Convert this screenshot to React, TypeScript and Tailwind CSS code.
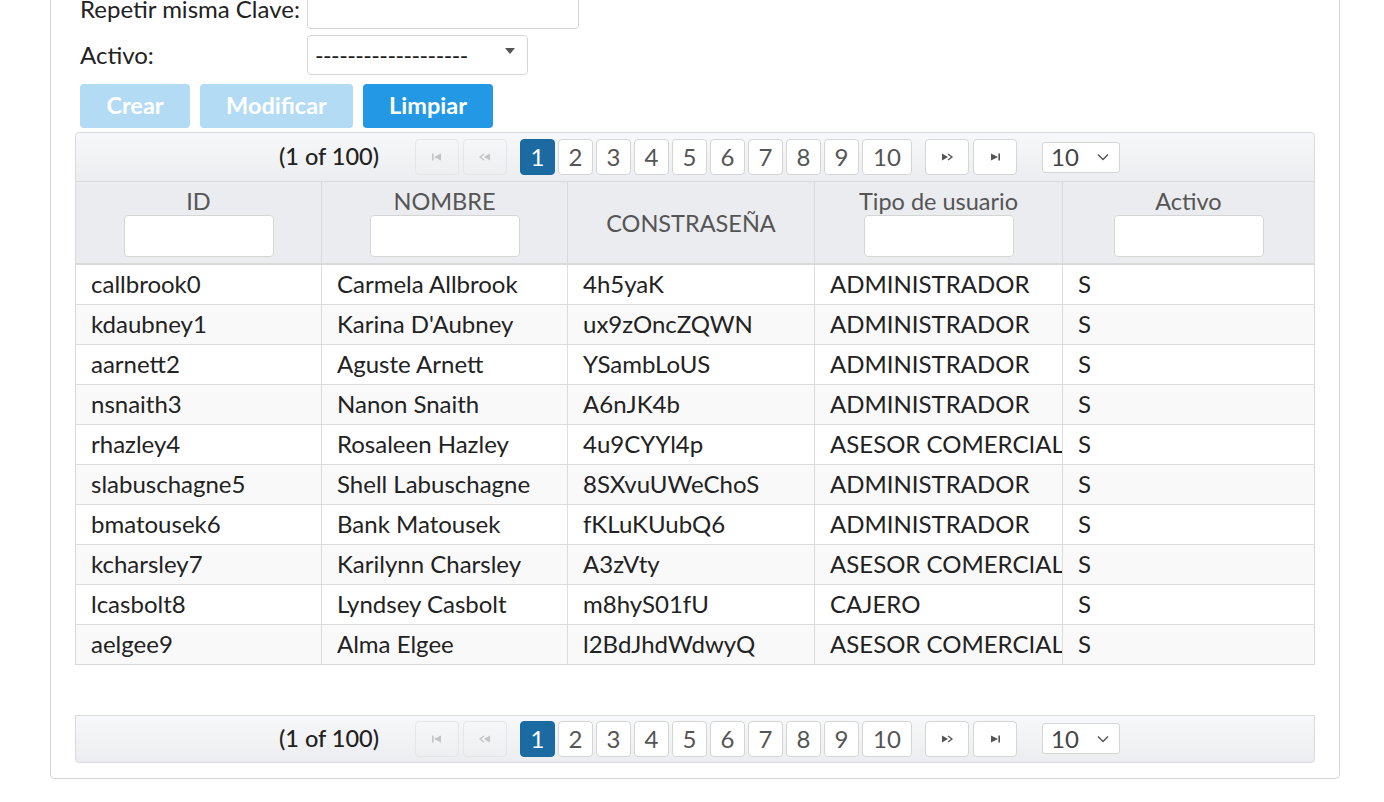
import React from 'react'

const users = [
  { id: 'callbrook0', nombre: 'Carmela Allbrook', clave: '4h5yaK', tipo: 'ADMINISTRADOR', activo: 'S' },
  { id: 'kdaubney1', nombre: "Karina D'Aubney", clave: 'ux9zOncZQWN', tipo: 'ADMINISTRADOR', activo: 'S' },
  { id: 'aarnett2', nombre: 'Aguste Arnett', clave: 'YSambLoUS', tipo: 'ADMINISTRADOR', activo: 'S' },
  { id: 'nsnaith3', nombre: 'Nanon Snaith', clave: 'A6nJK4b', tipo: 'ADMINISTRADOR', activo: 'S' },
  { id: 'rhazley4', nombre: 'Rosaleen Hazley', clave: '4u9CYYl4p', tipo: 'ASESOR COMERCIAL', activo: 'S' },
  { id: 'slabuschagne5', nombre: 'Shell Labuschagne', clave: '8SXvuUWeChoS', tipo: 'ADMINISTRADOR', activo: 'S' },
  { id: 'bmatousek6', nombre: 'Bank Matousek', clave: 'fKLuKUubQ6', tipo: 'ADMINISTRADOR', activo: 'S' },
  { id: 'kcharsley7', nombre: 'Karilynn Charsley', clave: 'A3zVty', tipo: 'ASESOR COMERCIAL', activo: 'S' },
  { id: 'lcasbolt8', nombre: 'Lyndsey Casbolt', clave: 'm8hyS01fU', tipo: 'CAJERO', activo: 'S' },
  { id: 'aelgee9', nombre: 'Alma Elgee', clave: 'l2BdJhdWdwyQ', tipo: 'ASESOR COMERCIAL', activo: 'S' },
]

const pages = [1, 2, 3, 4, 5, 6, 7, 8, 9, 10]

function NavIcon({ kind }: { kind: 'first' | 'prev' | 'next' | 'last' }) {
  return (
    <svg width="14" height="8" viewBox="0 0 14 8" fill="currentColor">
      {kind === 'first' && (
        <>
          <rect x="2" y="0.5" width="1.6" height="7" />
          <polygon points="4,4 11,0.5 11,7.5" />
        </>
      )}
      {kind === 'prev' && (
        <>
          <polyline points="6,1 2,4 6,7" fill="none" stroke="currentColor" strokeWidth="1.3" />
          <polygon points="6,4 12,0.5 12,7.5" />
        </>
      )}
      {kind === 'next' && (
        <>
          <polygon points="2,0.5 8,4 2,7.5" />
          <polyline points="8,1 12,4 8,7" fill="none" stroke="currentColor" strokeWidth="1.3" />
        </>
      )}
      {kind === 'last' && (
        <>
          <polygon points="3,0.5 10,4 3,7.5" />
          <rect x="10.4" y="0.5" width="1.6" height="7" />
        </>
      )}
    </svg>
  )
}

function Paginator({ position }: { position: 'top' | 'bottom' }) {
  const rounded = position === 'top' ? 'rounded-t-[4px] h-[50px]' : 'rounded-b-[4px] h-[48px]'
  return (
    <div
      className={`flex items-center border border-[#d9d9d9] bg-gradient-to-b from-[#f7f8f9] to-[#ebedf0] ${rounded}`}
    >
      <span className="ml-[203px] w-[110px] whitespace-nowrap text-[23.5px] font-medium text-[#222]">(1 of 100)</span>
      <div className="ml-[26px] flex gap-[4px]">
        {(['first', 'prev'] as const).map((k) => (
          <span
            key={k}
            className="flex h-[36px] w-[44px] items-center justify-center rounded-[4px] border border-[#e6e6e6] text-[#c4c4c4]"
          >
            <NavIcon kind={k} />
          </span>
        ))}
      </div>
      <div className="ml-[13px] flex gap-[3px]">
        {pages.map((p) => (
          <span
            key={p}
            className={`flex h-[36px] items-center justify-center rounded-[4px] border text-[24px] ${
              p === 10 ? 'w-[50px]' : 'w-[35px]'
            } ${
              p === 1
                ? 'border-[#1a6aa0] bg-[#1b6aa2] text-white'
                : 'border-[#d5d5d5] bg-white text-[#555]'
            }`}
          >
            {p}
          </span>
        ))}
      </div>
      <div className="ml-[13px] flex gap-[4px]">
        {(['next', 'last'] as const).map((k) => (
          <span
            key={k}
            className="flex h-[36px] w-[44px] items-center justify-center rounded-[4px] border border-[#d5d5d5] bg-white text-[#555]"
          >
            <NavIcon kind={k} />
          </span>
        ))}
      </div>
      <div className="ml-[25px] flex h-[31px] w-[78px] items-center justify-between rounded-[3px] border border-[#d5d5d5] bg-white pl-[8px] pr-[10px] text-[24px] text-[#444]">
        <span>10</span>
        <svg width="12" height="8" viewBox="0 0 12 8" fill="none" stroke="#555" strokeWidth="1.5">
          <polyline points="1,1.5 6,6.5 11,1.5" />
        </svg>
      </div>
    </div>
  )
}

function HeaderCell({ title, filter = true }: { title: string; filter?: boolean }) {
  return (
    <th className="h-[82px] border-r border-[#d9d9d9] align-middle font-normal last:border-r-0">
      <div className="flex flex-col items-center">
        <span className="text-[23.5px] leading-[26px] text-[#555]">{title}</span>
        {filter && (
          <div className="mt-[1px] h-[42px] w-[150px] rounded-[4px] border border-[#d5d5d5] bg-white" />
        )}
      </div>
    </th>
  )
}

export default function App() {
  return (
    <div className="h-[802px] overflow-hidden bg-white font-['Lato','Liberation_Sans',sans-serif] text-[#222]">
      <div className="-mt-[11px] ml-[50px] w-[1290px] rounded-b-[5px] border-x border-b border-[#d4d4d4] px-[24px] pb-[15px]">
        <div className="flex flex-col gap-[6px] pl-[5px]">
          <div className="flex items-center">
            <label className="w-[227px] text-[24px] leading-[30px]">Repetir misma Clave:</label>
            <div className="h-[40px] w-[272px] rounded-[4px] border border-[#d5d5d5] bg-white" />
          </div>
          <div className="flex items-center">
            <label className="w-[227px] text-[24px] leading-[30px]">Activo:</label>
            <div className="flex h-[40px] w-[221px] items-center justify-between rounded-[4px] border border-[#d5d5d5] bg-white pl-[7px] pr-[12px]">
              <span className="text-[23px] leading-[28px] tracking-[-0.5px]">-------------------</span>
              <svg width="10" height="6" viewBox="0 0 10 6" className="-mt-[8px]">
                <polygon points="0,0 10,0 5,6" fill="#555" />
              </svg>
            </div>
          </div>
          <div className="mt-[3px] flex gap-[10px]">
            <button className="h-[44px] w-[110px] rounded-[4px] bg-[#b3dbf4] text-[23.5px] font-bold text-white">
              Crear
            </button>
            <button className="h-[44px] w-[153px] rounded-[4px] bg-[#b3dbf4] text-[23.5px] font-bold text-white">
              Modificar
            </button>
            <button className="h-[44px] w-[130px] rounded-[4px] bg-[#2399e5] text-[23.5px] font-bold text-white">
              Limpiar
            </button>
          </div>
        </div>

        <div className="mt-[4px]">
          <Paginator position="top" />
          <table className="w-full table-fixed border-collapse border-x border-b border-[#d9d9d9] text-[24px]">
            <colgroup>
              <col className="w-[246px]" />
              <col className="w-[246px]" />
              <col className="w-[247px]" />
              <col className="w-[248px]" />
              <col />
            </colgroup>
            <thead className="border-b-2 border-[#d9d9d9] bg-[#ebecef]">
              <tr>
                <HeaderCell title="ID" />
                <HeaderCell title="NOMBRE" />
                <HeaderCell title="CONSTRASEÑA" filter={false} />
                <HeaderCell title="Tipo de usuario" />
                <HeaderCell title="Activo" />
              </tr>
            </thead>
            <tbody>
              {users.map((u, i) => (
                <tr key={u.id} className={`h-[40px] border-t border-[#dcdcdc] ${i % 2 ? 'bg-[#f9f9f9]' : 'bg-white'}`}>
                  <td className="truncate border-r border-[#dcdcdc] pl-[15px] leading-[28px] text-[#222]">{u.id}</td>
                  <td className="truncate border-r border-[#dcdcdc] pl-[15px] leading-[28px] text-[#222]">{u.nombre}</td>
                  <td className="truncate border-r border-[#dcdcdc] pl-[15px] leading-[28px] text-[#222]">{u.clave}</td>
                  <td className="overflow-hidden whitespace-nowrap border-r border-[#dcdcdc] pl-[15px] leading-[28px] text-[#222]">
                    {u.tipo}
                  </td>
                  <td className="pl-[15px] leading-[28px] text-[#222]">{u.activo}</td>
                </tr>
              ))}
            </tbody>
          </table>
          <div className="h-[50px]" />
          <Paginator position="bottom" />
        </div>
      </div>
    </div>
  )
}
